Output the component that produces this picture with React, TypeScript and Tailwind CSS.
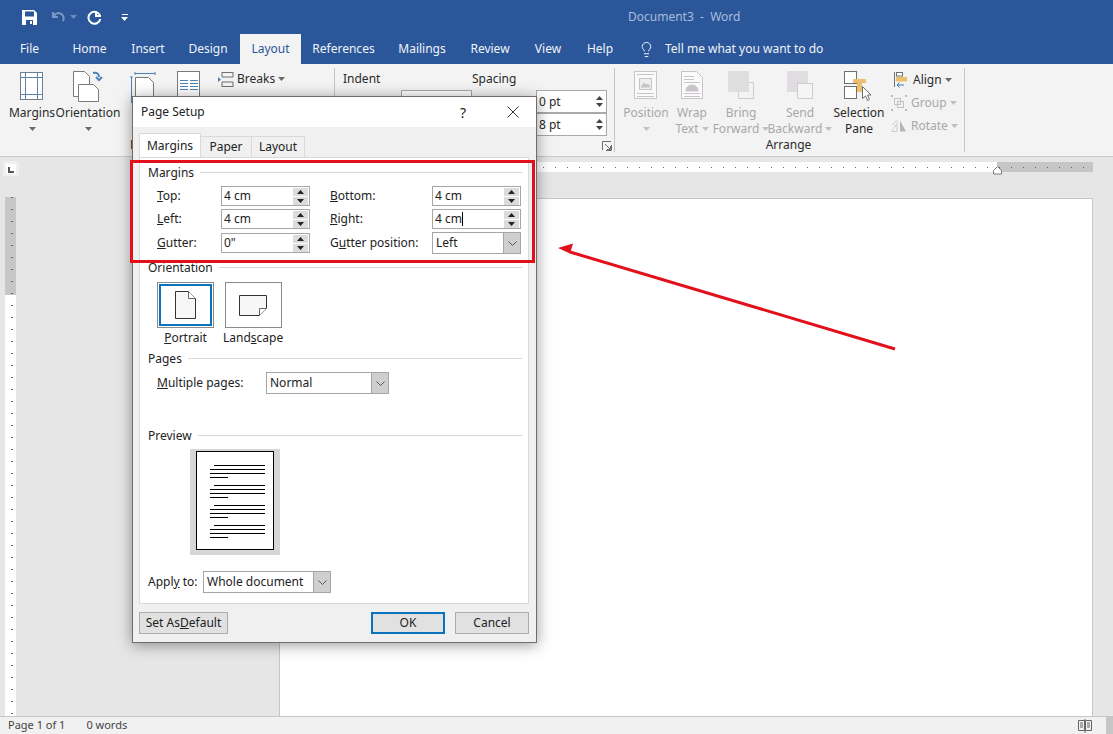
import React from "react";
import { Lightbulb } from "lucide-react";

const Caret = ({ color = "#6a6a6a", className = "" }: { color?: string; className?: string }) => (
  <svg width="7" height="4" viewBox="0 0 7 4" className={className}>
    <path d="M0 0h7L3.5 4z" fill={color} />
  </svg>
);

// ---- ribbon icons
const MarginsIcon = () => (
  <svg width="24" height="30" viewBox="0 0 24 30" fill="none" stroke="#5f7f9f">
    <rect x="0.5" y="1.5" width="22" height="27" stroke="#6e7f8f" fill="#fff" />
    <path d="M5.5 2v26M17.5 2v26M1 6.5h21M1 23.5h21" stroke="#5b85ad" />
  </svg>
);

const OrientationIcon = () => (
  <svg width="30" height="32" viewBox="0 0 30 32" fill="none">
    <path d="M0.5 0.5h11l5 5v20h-16z" fill="#fff" stroke="#7a7a7a" />
    <path d="M5.5 13.5h15l5 5v12h-20z" fill="#fff" stroke="#7a7a7a" />
    <path d="M20 2c4-1 6 1 6 4M23 6l3 3 3-3" stroke="#4d82b8" strokeWidth="2" />
  </svg>
);

const SizeIcon = () => (
  <svg width="26" height="32" viewBox="0 0 26 32" fill="none">
    <path d="M5 1.5h20M5 0v3M25 0v3" stroke="#4d82b8" />
    <path d="M1.5 5v26M0 5h3" stroke="#4d82b8" />
    <path d="M5.5 5.5h13l5 5v20h-18z" fill="#fff" stroke="#7a7a7a" />
  </svg>
);

const ColumnsIcon = () => (
  <svg width="24" height="30" viewBox="0 0 24 30" fill="none">
    <rect x="0.5" y="0.5" width="22" height="28" fill="#fff" stroke="#7a7a7a" />
    <path d="M3 9.5h8M13 9.5h8M3 12.5h8M13 12.5h8M3 15.5h8M13 15.5h8M3 18.5h8M13 18.5h8" stroke="#4d82b8" />
  </svg>
);

const PositionIcon = () => (
  <svg width="24" height="28" viewBox="0 0 24 28" fill="none" stroke="#c9c4c9">
    <rect x="0.5" y="0.5" width="22" height="27" fill="#fafafa" />
    <rect x="5.5" y="7.5" width="12" height="11" fill="#eee" />
    <path d="M3 3.5h17M3 22.5h17M3 25.5h17" />
    <path d="M7 16l3-4 2 2 2-1 2 3z" fill="#c9c4c9" />
  </svg>
);

const WrapIcon = () => (
  <svg width="22" height="28" viewBox="0 0 22 28" fill="none" stroke="#c9c4c9">
    <path d="M0.5 0.5h15l6 6v21h-21z" fill="#fafafa" />
    <path d="M3 5.5h10M3 8.5h10M3 11.5h16M3 22.5h16M3 25.5h16" />
    <path d="M5 20c0-8 12-8 12 0z" fill="#c9c4c9" />
  </svg>
);

const BringIcon = () => (
  <svg width="26" height="28" viewBox="0 0 26 28" fill="none">
    <path d="M9 11.5h16.500v16h-15v-6" stroke="#cfcbcf" />
    <rect x="0" y="0" width="21" height="21" fill="#e0dde0" />
  </svg>
);

const SendIcon = () => (
  <svg width="26" height="28" viewBox="0 0 26 28" fill="none">
    <rect x="0" y="0" width="21" height="21" fill="#e0dde0" />
    <rect x="10.500" y="12.500" width="15" height="15" fill="#f5f5f5" stroke="#cfcbcf" />
  </svg>
);

const SelectionIcon = () => (
  <svg width="30" height="32" viewBox="0 0 30 32" fill="none">
    <rect x="0.5" y="0.5" width="12" height="12" fill="#fff" stroke="#6f6f6f" />
    <rect x="0.5" y="15.500" width="12" height="12" fill="#fff" stroke="#6f6f6f" />
    <path d="M9 8h13v4h-4v9h-5v-9H9z" fill="#eac06f" />
    <path d="M18.500 15.500v12l3-2.500 2 4.500 2-1-2-4.500h3.500z" fill="#fff" stroke="#6f6f6f" />
  </svg>
);

const AlignIcon = () => (
  <svg width="14" height="16" viewBox="0 0 14 16" fill="none">
    <path d="M0.500 0v15" stroke="#6f6f6f" />
    <rect x="2.500" y="0.500" width="6" height="3.500" fill="#fff" stroke="#6f6f6f" />
    <rect x="2" y="5" width="11" height="4.500" fill="#eac06f" />
    <path d="M10 13H3M5.500 10.500L3 13l2.500 2.500" stroke="#3f78b5" />
  </svg>
);

const GroupIcon = () => (
  <svg width="16" height="16" viewBox="0 0 16 16" fill="none" stroke="#c4c0c4">
    <rect x="3.500" y="3.500" width="6" height="6" />
    <rect x="6.500" y="6.500" width="6" height="6" />
    <path d="M0 0h2v2H0zM14 0h2v2h-2zM0 14h2v2H0zM14 14h2v2h-2z" fill="#bdbabd" stroke="none" />
  </svg>
);

const RotateIcon = () => (
  <svg width="16" height="12" viewBox="0 0 16 12" fill="none">
    <path d="M0.500 11.500L6 3.500v8z" stroke="#cfcbcf" />
    <path d="M9 0.500l6 11H9z" fill="#b8b5b8" />
    <path d="M2 5c0-3 3-4 5-4" stroke="#cfcbcf" />
  </svg>
);

const LargeButton = ({
  width,
  icon,
  lines,
  disabled,
  caretOnSecond,
}: {
  width: string;
  icon?: React.ReactNode;
  lines: string[];
  disabled?: boolean;
  caretOnSecond?: boolean;
}) => (
  <div className={`flex flex-col items-center ${width} ${disabled ? "text-[#a8a8a8]" : "text-[#2a2a2a]"}`}>
    <div className="h-[34px] flex items-start justify-center">{icon}</div>
    {lines.map((line, i) => (
      <div key={line} className="h-4 leading-4 whitespace-nowrap flex items-center gap-[3px]">
        {line}
        {caretOnSecond && i === lines.length - 1 && <Caret color={disabled ? "#c0c0c0" : "#6a6a6a"} />}
      </div>
    ))}
    {lines.length === 1 && (
      <div className="h-4 flex items-center">
        <Caret color={disabled ? "#c0c0c0" : "#6a6a6a"} />
      </div>
    )}
  </div>
);

const RibbonSpin = ({ value }: { value: string }) => (
  <div className="h-[23px] w-[71px] bg-white border border-[#a9a9a9] flex items-center justify-between pl-[2px] pr-[3px] text-[#2a2a2a]">
    <span>{value}</span>
    <span className="flex flex-col gap-[3px]">
      <svg width="7" height="4" viewBox="0 0 7 4"><path d="M0 4h7L3.500 0z" fill="#444" /></svg>
      <svg width="7" height="4" viewBox="0 0 7 4"><path d="M0 0h7L3.500 4z" fill="#444" /></svg>
    </span>
  </div>
);

const Ribbon = () => (
  <div className="h-[93px] bg-[#f3f3f3] border-b border-[#c9c9c9] flex text-[12px]">
    {/* Page setup group */}
    <div className="w-[335px] my-[4px] border-r border-[#c6c6c6] flex flex-col">
      <div className="h-[72px] flex pl-[8px] pt-[3px]">
        <LargeButton width="w-[48px]" icon={<MarginsIcon />} lines={["Margins"]} />
        <div className="w-[2px]" />
        <LargeButton width="w-[60px]" icon={<OrientationIcon />} lines={["Orientation"]} />
        <div className="w-[12px]" />
        <div className="w-[40px] pt-[1px]"><SizeIcon /></div>
        <div className="w-[48px] pl-[7px]"><ColumnsIcon /></div>
        <div className="flex items-start gap-[3px] text-[#2a2a2a]">
          <svg width="16" height="16" viewBox="0 0 16 16" fill="none" className="mt-[1px]">
            <path d="M4 0.500h11M4 14.500h11M4 0v5h11V0M4 15v-5h11v5" stroke="#6f6f6f" />
            <path d="M0 5l3 2.500L0 10z" fill="#4d82b8" />
          </svg>
          <span className="leading-4 flex items-center gap-[3px]">Breaks <Caret /></span>
        </div>
      </div>
      <div className="h-4 leading-4 pl-[130px] text-[#2a2a2a]">Page Setup</div>
    </div>

    {/* Paragraph group */}
    <div className="w-[280px] my-[4px] border-r border-[#c6c6c6] flex flex-col relative">
      <div className="h-[72px] flex">
        <div className="w-[137px] pl-[8px] pt-[3px] text-[#2a2a2a]">
          <div className="leading-4 h-4">Indent</div>
          <div className="mt-[3px] ml-[58px] h-[23px] w-[71px] bg-white border border-[#a9a9a9]" />
        </div>
        <div className="pt-[3px] text-[#2a2a2a]">
          <div className="leading-4 h-4">Spacing</div>
          <div className="mt-[3px] flex flex-col gap-[0px] ml-[64px]">
            <RibbonSpin value="0 pt" />
            <RibbonSpin value="8 pt" />
          </div>
        </div>
      </div>
      <div className="flex justify-end pr-[2px] pt-[1px]">
        <svg width="10" height="10" viewBox="0 0 10 10" fill="none" stroke="#6f6f6f">
          <path d="M0.500 9V0.500H9M9.500 4v5.500H4M3 3l5 5M8.500 5v3.500H5" />
        </svg>
      </div>
    </div>

    {/* Arrange group */}
    <div className="w-[350px] my-[4px] border-r border-[#c6c6c6] flex flex-col">
      <div className="h-[72px] flex pt-[3px]">
        <div className="w-[8px]" />
        <LargeButton width="w-[46px]" disabled icon={<PositionIcon />} lines={["Position"]} />
        <LargeButton width="w-[46px]" disabled icon={<WrapIcon />} lines={["Wrap", "Text"]} caretOnSecond />
        <LargeButton width="w-[52px]" disabled icon={<BringIcon />} lines={["Bring", "Forward"]} caretOnSecond />
        <LargeButton width="w-[66px]" disabled icon={<SendIcon />} lines={["Send", "Backward"]} caretOnSecond />
        <LargeButton width="w-[52px]" icon={<SelectionIcon />} lines={["Selection", "Pane"]} />
        <div className="pl-[6px] flex flex-col gap-[7px] pt-[1px]">
          <div className="h-4 flex items-center gap-[5px] pl-[3px] text-[#2a2a2a]">
            <AlignIcon />
            <span className="flex items-center gap-[3px]">Align <Caret /></span>
          </div>
          <div className="h-4 flex items-center gap-[4px] text-[#a8a8a8]">
            <GroupIcon />
            <span className="flex items-center gap-[3px]">Group <Caret color="#c0c0c0" /></span>
          </div>
          <div className="h-4 flex items-center gap-[4px] text-[#a8a8a8]">
            <RotateIcon />
            <span className="flex items-center gap-[3px]">Rotate <Caret color="#c0c0c0" /></span>
          </div>
        </div>
      </div>
      <div className="h-4 leading-4 text-center pr-[2px] text-[#2a2a2a]">Arrange</div>
    </div>
  </div>
);

// ---- rulers
const HorizontalRuler = () => {
  const marks: React.ReactNode[] = [];
  for (let x = 0; x <= 814; x += 12) {
    const fromZero = x - 94;
    const rem = ((fromZero % 96) + 96) % 96;
    if (rem === 0) {
      marks.push(
        <text key={x} x={x} y="8.500" fontSize="10" textAnchor="middle" fill="#555">
          {Math.round(fromZero / 96)}
        </text>,
      );
    } else if (rem === 48) {
      marks.push(<rect key={x} x={x} y="3" width="1" height="5" fill="#666" />);
    } else {
      marks.push(<rect key={x} x={x} y="5" width="1" height="1" fill="#666" />);
    }
  }
  return (
    <svg width="814" height="14" viewBox="0 0 814 14" className="block">
      <rect x="0" y="0" width="718" height="10" fill="#fff" />
      <rect x="718" y="0" width="96" height="10" fill="#c6c6c6" />
      {marks}
      <path d="M718.500 4.500l4 4v3.500h-8V8.500z" fill="#fff" stroke="#7a7a7a" />
    </svg>
  );
};

const VerticalRuler = () => {
  const marks: React.ReactNode[] = [];
  for (let y = 0; y <= 519; y += 12) {
    const fromZero = y - 97;
    const rem = ((fromZero % 96) + 96) % 96;
    const n = Math.abs(Math.round(fromZero / 96));
    if (rem === 0 && n > 0) {
      marks.push(
        <text key={y} x="0" y="0" fontSize="10" textAnchor="middle" fill="#555" transform={`translate(3.500 ${y}) rotate(-90) translate(0 0)`}>
          {n}
        </text>,
      );
    } else if (rem === 48) {
      marks.push(<rect key={y} x="4" y={y} width="6" height="1" fill="#666" />);
    } else {
      marks.push(<rect key={y} x="6" y={y} width="2" height="1" fill="#666" />);
    }
  }
  return (
    <svg width="11" height="519" viewBox="0 0 11 519" className="block">
      <rect x="0" y="0" width="11" height="98" fill="#c6c6c6" />
      <rect x="0" y="98" width="11" height="421" fill="#fff" />
      {marks}
    </svg>
  );
};

// ---- dialog pieces
const Spinner = () => (
  <div className="w-[15px] h-[17px] flex flex-col gap-[1px] mr-[1px]">
    <div className="flex-1 bg-[#dcdcdc] flex items-center justify-center">
      <svg width="7" height="4" viewBox="0 0 7 4"><path d="M0 4h7L3.500 0z" fill="#222" /></svg>
    </div>
    <div className="flex-1 bg-[#dcdcdc] flex items-center justify-center">
      <svg width="7" height="4" viewBox="0 0 7 4"><path d="M0 0h7L3.500 4z" fill="#222" /></svg>
    </div>
  </div>
);

const SpinInput = ({ value, caret }: { value: string; caret?: boolean }) => (
  <div className="w-[89px] h-[20px] bg-white border border-[#a6a6a6] flex items-center justify-between pl-[2px]">
    <span className="flex items-center">
      {value}
      {caret && <span className="w-[1px] h-[14px] bg-black" />}
    </span>
    <Spinner />
  </div>
);

const Combo = ({ value, width }: { value: string; width: string }) => (
  <div className={`${width} h-[22px] bg-white border border-[#a6a6a6] flex items-center justify-between pl-[3px]`}>
    <span>{value}</span>
    <div className="w-[17px] h-[20px] bg-[#cfcfcf] border-l border-[#a6a6a6] flex items-center justify-center">
      <svg width="9" height="5" viewBox="0 0 9 5" fill="none"><path d="M0.500 0.500l4 4 4-4" stroke="#555" /></svg>
    </div>
  </div>
);

const SectionTitle = ({ title, className = "" }: { title: string; className?: string }) => (
  <div className={`h-4 flex items-center gap-[6px] ${className}`}>
    <span className="leading-4">{title}</span>
    <div className="flex-1 h-px bg-[#d9d9d9] -translate-y-[1px]" />
  </div>
);

const MarginRow = ({
  label,
  input,
  label2,
  input2,
}: {
  label: React.ReactNode;
  input: React.ReactNode;
  label2: React.ReactNode;
  input2: React.ReactNode;
}) => (
  <div className="flex items-center pl-[9px]">
    <div className="w-[64px]">{label}</div>
    {input}
    <div className="w-[102px] ml-[20px]">{label2}</div>
    {input2}
  </div>
);

const PreviewPage = () => {
  const paragraphs = [465, 485, 505, 525];
  return (
    <svg width="90" height="106" viewBox="0 0 90 106" className="block ml-[42px]">
      <rect width="90" height="106" fill="#d6d6d6" />
      <rect x="6.500" y="2.500" width="77" height="98" fill="#fff" stroke="#000" />
      {paragraphs.map((y) => (
        <g key={y} fill="#000">
          <rect x="24" y={y - 449} width="51" height="1" />
          <rect x="20" y={y - 445} width="55" height="1" />
          <rect x="20" y={y - 441} width="55" height="1" />
          <rect x="20" y={y - 437} width="18" height="1" />
        </g>
      ))}
    </svg>
  );
};

const PageSetupDialog = () => (
  <div className="absolute left-[132px] top-[96px] w-[405px] h-[547px] bg-[#f0f0f0] border border-[#6d6d6d] shadow-[0_2px_14px_rgba(0,0,0,0.4)] text-[12px] text-[#222] flex flex-col">
    {/* title */}
    <div className="h-[30px] shrink-0 bg-white flex items-center pl-[8px] relative">
      <span>Page Setup</span>
      <span className="ml-auto mr-[41px] text-[14px]">?</span>
      <svg width="12" height="12" viewBox="0 0 12 12" fill="none" className="mr-[17px]">
        <path d="M0.500 0.500l11 11M11.500 0.500l-11 11" stroke="#333" />
      </svg>
    </div>
    {/* tabs */}
    <div className="h-[30px] shrink-0 flex items-end pl-[6px] relative z-10">
      <div className="w-[62px] h-[24px] bg-white border border-b-0 border-[#d9d9d9] flex items-center justify-center">Margins</div>
      <div className="w-[51px] h-[21px] bg-[#f0f0f0] border border-l-0 border-b-0 border-[#d9d9d9] flex items-center justify-center">Paper</div>
      <div className="w-[53px] h-[21px] bg-[#f0f0f0] border border-l-0 border-b-0 border-[#d9d9d9] flex items-center justify-center">Layout</div>
    </div>
    {/* panel */}
    <div className="mx-[6px] w-[390px] h-[447px] bg-white border border-[#d9d9d9] pl-[8px] pr-[6px] pt-[7px] shrink-0">
      <SectionTitle title="Margins" />
      <div className="mt-[5px] flex flex-col gap-[3px]">
        <MarginRow
          label={<span><u>T</u>op:</span>}
          input={<SpinInput value="4 cm" />}
          label2={<span><u>B</u>ottom:</span>}
          input2={<SpinInput value="4 cm" />}
        />
        <MarginRow
          label={<span><u>L</u>eft:</span>}
          input={<SpinInput value="4 cm" />}
          label2={<span><u>R</u>ight:</span>}
          input2={<SpinInput value="4 cm" caret />}
        />
        <MarginRow
          label={<span><u>G</u>utter:</span>}
          input={<SpinInput value={'0"'} />}
          label2={<span>G<u>u</u>tter position:</span>}
          input2={<Combo value="Left" width="w-[89px]" />}
        />
      </div>
      <SectionTitle title="Orientation" className="mt-[6px]" />
      <div className="mt-[6px] pl-[9px] flex gap-[9px]">
        <div className="flex flex-col items-center">
          <div className="w-[57px] h-[46px] border border-[#8a8a8a] p-[1px]">
            <div className="w-full h-full border-[2px] border-[#0a73bd] flex items-center justify-center">
              <svg width="22" height="28" viewBox="0 0 22 28" fill="none">
                <path d="M0.500 0.500h13l7 7v20h-20z" fill="#f7f7f7" stroke="#333" />
                <path d="M13.500 0.500v7h7" fill="#fff" stroke="#666" />
              </svg>
            </div>
          </div>
          <span className="h-4 leading-4 mt-[2px]"><u>P</u>ortrait</span>
        </div>
        <div className="flex flex-col items-center">
          <div className="w-[57px] h-[46px] border border-[#8a8a8a] flex items-center justify-center">
            <svg width="29" height="21" viewBox="0 0 29 21" fill="none">
              <path d="M0.500 0.500h27v13l-7 7h-20z" fill="#f7f7f7" stroke="#333" />
              <path d="M27.500 13.500h-7v7" fill="#fff" stroke="#666" />
            </svg>
          </div>
          <span className="h-4 leading-4 mt-[2px]">Land<u>s</u>cape</span>
        </div>
      </div>
      <SectionTitle title="Pages" className="mt-[5px]" />
      <div className="mt-[5px] pl-[9px] flex items-center">
        <div className="w-[109px]"><u>M</u>ultiple pages:</div>
        <Combo value="Normal" width="w-[123px]" />
      </div>
      <SectionTitle title="Preview" className="mt-[34px]" />
      <div className="mt-[5px]"><PreviewPage /></div>
      <div className="mt-[16px] flex items-center">
        <div className="w-[55px]">Appl<u>y</u> to:</div>
        <Combo value="Whole document" width="w-[128px]" />
      </div>
    </div>
    {/* footer */}
    <div className="mt-[8px] pl-[6px] flex">
      <div className="w-[89px] h-[22px] bg-[#e1e1e1] border border-[#adadad] flex items-center justify-center">Set As <u>D</u>efault</div>
      <div className="ml-[143px] w-[74px] h-[22px] bg-[#e1e1e1] border-[2px] border-[#0a73bd] flex items-center justify-center">OK</div>
      <div className="ml-[10px] w-[74px] h-[22px] bg-[#e1e1e1] border border-[#adadad] flex items-center justify-center">Cancel</div>
    </div>
  </div>
);

const tabs = [
  { label: "File", w: "w-[59px]" },
  { label: "Home", w: "w-[61px]" },
  { label: "Insert", w: "w-[56px]" },
  { label: "Design", w: "w-[64px]" },
  { label: "Layout", w: "w-[61px]", active: true },
  { label: "References", w: "w-[85px]" },
  { label: "Mailings", w: "w-[72px]" },
  { label: "Review", w: "w-[64px]" },
  { label: "View", w: "w-[52px]" },
  { label: "Help", w: "w-[52px]" },
];

export default function App() {
  return (
    <div
      className="relative w-[1113px] h-[734px] overflow-hidden bg-[#e6e6e6] flex flex-col text-[12px]"
      style={{ fontFamily: '"Noto Sans", "Open Sans", sans-serif' }}
    >
      {/* title bar */}
      <div className="h-[34px] bg-[#2b579a] flex items-center relative">
        <div className="flex items-center pl-[22px]">
          <svg width="15" height="15" viewBox="0 0 15 15">
            <path d="M0 0h12l3 3v12H0z" fill="#fff" />
            <rect x="3" y="1.500" width="9" height="5" fill="#2b579a" />
            <rect x="4" y="10" width="7" height="5" fill="#2b579a" />
            <rect x="8" y="11" width="2" height="3" fill="#fff" />
          </svg>
          <svg width="14" height="14" viewBox="0 0 14 14" fill="none" className="ml-[15px]">
            <path d="M1 2v5h5M1.500 6.500C3 3.500 6 2.500 8.500 3.500c3 1.200 4 4.500 2.500 7.500" stroke="#7e97c2" strokeWidth="2" />
          </svg>
          <Caret color="#6f8bb9" className="ml-[4px]" />
          <svg width="15" height="15" viewBox="0 0 15 15" fill="none" className="ml-[10px]">
            <path d="M9 1v5h5M13 5.500A6 6 0 1 0 13.300 9" stroke="#fff" strokeWidth="2" />
          </svg>
          <span className="ml-[19px] flex flex-col items-center gap-[2px]">
            <span className="w-[6px] h-px bg-white" />
            <Caret color="#fff" />
          </span>
        </div>
        <span className="absolute left-[628px] text-[12px] text-[#a9bcdb] whitespace-pre">Document3  -  Word</span>
      </div>

      {/* tabs */}
      <div className="h-[30px] bg-[#2b579a] flex text-[12px] text-[#f0f3f8]">
        {tabs.map((t) => (
          <div
            key={t.label}
            className={`${t.w} flex items-center justify-center ${t.active ? "bg-[#f3f3f3] text-[#2b579a]" : ""}`}
          >
            {t.label}
          </div>
        ))}
        <div className="flex items-center ml-[12px] gap-[10px]">
          <Lightbulb size={17} strokeWidth={1.4} />
          <span>Tell me what you want to do</span>
        </div>
      </div>

      <Ribbon />

      {/* document area */}
      <div className="flex-1 flex min-h-0">
        <div className="w-[279px] shrink-0 relative">
          <div className="ml-[3px] mt-[4px] w-[16px] h-[15px] bg-[#efefef] flex items-center justify-center">
            <span className="w-[10px] h-[10px] bg-white flex items-end justify-center pb-[1px]">
              <span className="w-[6px] h-[6px] border-l-2 border-b-2 border-[#555]" />
            </span>
          </div>
          <div className="ml-[5px] mt-[21px]">
            <VerticalRuler />
          </div>
        </div>
        <div className="w-[814px] shrink-0 flex flex-col">
          <div className="mt-[5px] h-[14px]">
            <HorizontalRuler />
          </div>
          <div className="mt-[22px] flex-1 bg-white border border-[#c6c6c6] border-b-0" />
        </div>
      </div>

      {/* status bar */}
      <div className="h-[18px] bg-[#f1f1f1] border-t border-[#c6c6c6] flex items-center pl-[8px] text-[#444] text-[11px] relative">
        <span>Page 1 of 1</span>
        <span className="ml-[21px]">0 words</span>
        <svg width="14" height="14" viewBox="0 0 14 14" fill="none" stroke="#666" className="ml-auto mr-[21px]">
          <path d="M0.500 1.500h6v10h-6zM7.500 1.500h6v10h-6zM7 0v14M2 4h3M2 6h3M2 8h3M9 4h3M9 6h3M9 8h3" />
        </svg>
        <div className="absolute right-0 top-0 bottom-0 w-[7px] bg-[#c6c6c6]" />
      </div>

      <PageSetupDialog />

      {/* red annotations */}
      <div className="absolute left-[130px] top-[160px] w-[405px] h-[103px] border-[3px] border-[#e2101a]" />
      <svg width="1113" height="734" viewBox="0 0 1113 734" className="absolute inset-0 pointer-events-none">
        <path d="M895 349L570 252" stroke="#e2101a" strokeWidth="3" fill="none" />
        <path d="M558 248l15-4.500-3 10z" fill="#e2101a" />
      </svg>
    </div>
  );
}
